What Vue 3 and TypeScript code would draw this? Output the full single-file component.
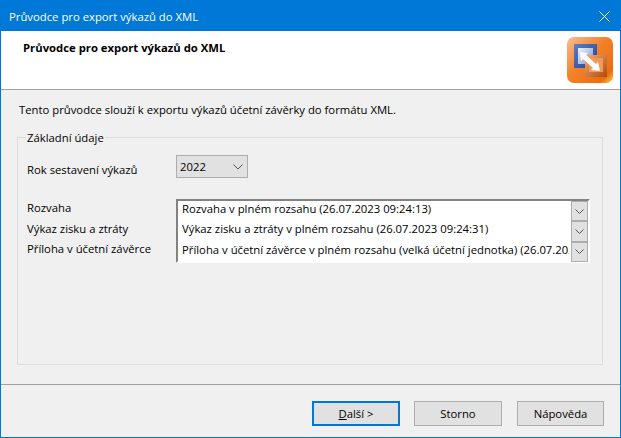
<script setup lang="ts">
const rows = [
  { label: 'Rozvaha', value: 'Rozvaha v plném rozsahu (26.07.2023 09:24:13)' },
  { label: 'Výkaz zisku a ztráty', value: 'Výkaz zisku a ztráty v plném rozsahu (26.07.2023 09:24:31)' },
  { label: 'Příloha v účetní závěrce', value: 'Příloha v účetní závěrce v plném rozsahu (velká účetní jednotka) (26.07.2023 09:24:40)' },
]
</script>

<template>
  <div class="window">
    <div class="titlebar">
      <span class="title">Průvodce pro export výkazů do XML</span>
      <svg class="close" width="11" height="11" viewBox="0 0 11 11">
        <path d="M0.5 0.5 L10.5 10.5 M10.5 0.5 L0.5 10.5" stroke="#fff" stroke-width="1" fill="none" />
      </svg>
    </div>
    <div class="header">
      <span class="heading">Průvodce pro export výkazů do XML</span>
      <svg class="logo" width="46" height="46" viewBox="0 0 46 46">
        <defs>
          <linearGradient id="bg" x1="0" y1="0" x2="1" y2="1">
            <stop offset="0" stop-color="#f6bd98" />
            <stop offset="0.45" stop-color="#f2822a" />
            <stop offset="0.85" stop-color="#ef6c10" />
            <stop offset="1" stop-color="#fbd03c" />
          </linearGradient>
          <linearGradient id="blue" x1="0" y1="0" x2="1" y2="1">
            <stop offset="0" stop-color="#5f7fc0" />
            <stop offset="1" stop-color="#1d3f94" />
          </linearGradient>
          <linearGradient id="inner" x1="0" y1="0" x2="1" y2="1">
            <stop offset="0" stop-color="#eef1f8" />
            <stop offset="1" stop-color="#7f97cc" />
          </linearGradient>
          <linearGradient id="brown" x1="0" y1="0" x2="1" y2="1">
            <stop offset="0" stop-color="#f2ab78" />
            <stop offset="1" stop-color="#ad4a0c" />
          </linearGradient>
        </defs>
        <rect x="0" y="0" width="46" height="46" rx="7" fill="url(#bg)" />
        <g class="logo-art">
          <rect x="7" y="7" width="23" height="24" fill="url(#blue)" />
          <rect x="11" y="11" width="15" height="16" fill="url(#inner)" />
          <rect x="18" y="18" width="22" height="22" fill="url(#brown)" />
          <rect x="22" y="21" width="14" height="14" fill="#f19a58" />
          <path d="M13 15 L21 16 L19 18 L29 27 L31 25 L33 34 L24 33 L26 31 L16 22 L14 24 Z" fill="#fff" />
        </g>
      </svg>
    </div>
    <div class="body">
      <p class="intro">Tento průvodce slouží k exportu výkazů účetní závěrky do formátu XML.</p>
      <div class="group">
        <span class="legend">Základní údaje</span>
        <div class="year-row">
          <span class="year-label">Rok sestavení výkazů</span>
          <div class="combo">
            <span>2022</span>
            <svg width="10" height="6" viewBox="0 0 10 6">
              <path d="M0.5 0.5 L5 5 L9.5 0.5" stroke="#555" fill="none" />
            </svg>
          </div>
        </div>
        <div class="reports">
          <div class="labels">
            <span v-for="r in rows" :key="r.label">{{ r.label }}</span>
          </div>
          <div class="list">
            <div v-for="r in rows" :key="r.value" class="list-row">
              <span class="value">{{ r.value }}</span>
              <span class="drop">
                <svg width="9" height="5" viewBox="0 0 9 5">
                  <path d="M0.5 0.5 L4.5 4.5 L8.5 0.5" stroke="#555" fill="none" />
                </svg>
              </span>
            </div>
          </div>
        </div>
      </div>
    </div>
    <div class="footer">
      <button class="btn primary"><span><u>D</u>alší &gt;</span></button>
      <button class="btn">Storno</button>
      <button class="btn help">Nápověda</button>
    </div>
  </div>
</template>

<style scoped>
.window {
  box-sizing: border-box;
  width: 621px;
  height: 438px;
  border: 1px solid #0078d7;
  background: #f0f0f0;
  display: flex;
  flex-direction: column;
  font-family: "Open Sans", "Noto Sans", sans-serif;
  font-size: 11.3px;
  color: #000;
  overflow: hidden;
}
.titlebar {
  height: 30px;
  flex: none;
  background: #0078d7;
  color: #fff;
  display: flex;
  align-items: center;
  justify-content: space-between;
  padding: 0 10px 0 8px;
}
.header {
  height: 59px;
  flex: none;
  box-sizing: border-box;
  background: #fff;
  border-bottom: 1px solid #a0a0a0;
  display: flex;
  justify-content: space-between;
  padding: 8px 7px 0 22px;
}
.heading {
  font-weight: 700;
  line-height: 18px;
}
.logo {
  margin-top: -2px;
}
.logo-art {
  filter: blur(0.4px);
}
.body {
  flex: 1;
  padding: 0 17px 0 16px;
  display: flex;
  flex-direction: column;
}
.intro {
  margin: 11px 0 0 2px;
  line-height: 18px;
}
.group {
  box-sizing: border-box;
  margin-top: 18px;
  height: 228px;
  border: 1px solid #dcdcdc;
  padding: 17px 12px 0 9px;
  position: relative;
}
.legend {
  position: absolute;
  left: 8px;
  top: -8px;
  padding: 0 1px;
  background: #f0f0f0;
  line-height: 16px;
}
.year-row {
  display: flex;
}
.year-label {
  width: 149px;
  flex: none;
  padding-top: 6px;
  line-height: 18px;
}
.combo {
  box-sizing: border-box;
  width: 72px;
  height: 23px;
  background: #e1e1e1;
  border: 1px solid #adadad;
  display: flex;
  align-items: center;
  justify-content: space-between;
  padding: 0 4px 0 3px;
}
.reports {
  display: flex;
  margin-top: 20px;
}
.labels {
  width: 149px;
  flex: none;
  display: flex;
  flex-direction: column;
}
.labels span {
  height: 20.5px;
  line-height: 18px;
}
.list {
  box-sizing: border-box;
  width: 414px;
  height: 64px;
  flex: none;
  background: #fff;
  border: 2px solid;
  border-color: #828282 #fff #fff #828282;
  display: flex;
  flex-direction: column;
}
.list-row {
  height: 20.3px;
  flex: none;
  display: flex;
  justify-content: space-between;
  padding-left: 4px;
}
.value {
  width: 387px;
  overflow: hidden;
  white-space: nowrap;
  line-height: 16px;
}
.drop {
  box-sizing: border-box;
  width: 17px;
  background: #e1e1e1;
  border: 1px solid #adadad;
  display: flex;
  align-items: center;
  justify-content: center;
}
.footer {
  flex: none;
  height: 53px;
  border-top: 1px solid #a0a0a0;
  box-sizing: border-box;
  display: flex;
  justify-content: flex-end;
  gap: 14px;
  padding: 16px 16px 0 0;
}
.btn {
  box-sizing: border-box;
  width: 88px;
  height: 25px;
  background: #e1e1e1;
  border: 1px solid #adadad;
  font: inherit;
  color: #000;
  padding: 0;
}
.help {
  width: 87px;
  margin-left: 1px;
}
.primary {
  border: 2px solid #0078d7;
}
</style>
